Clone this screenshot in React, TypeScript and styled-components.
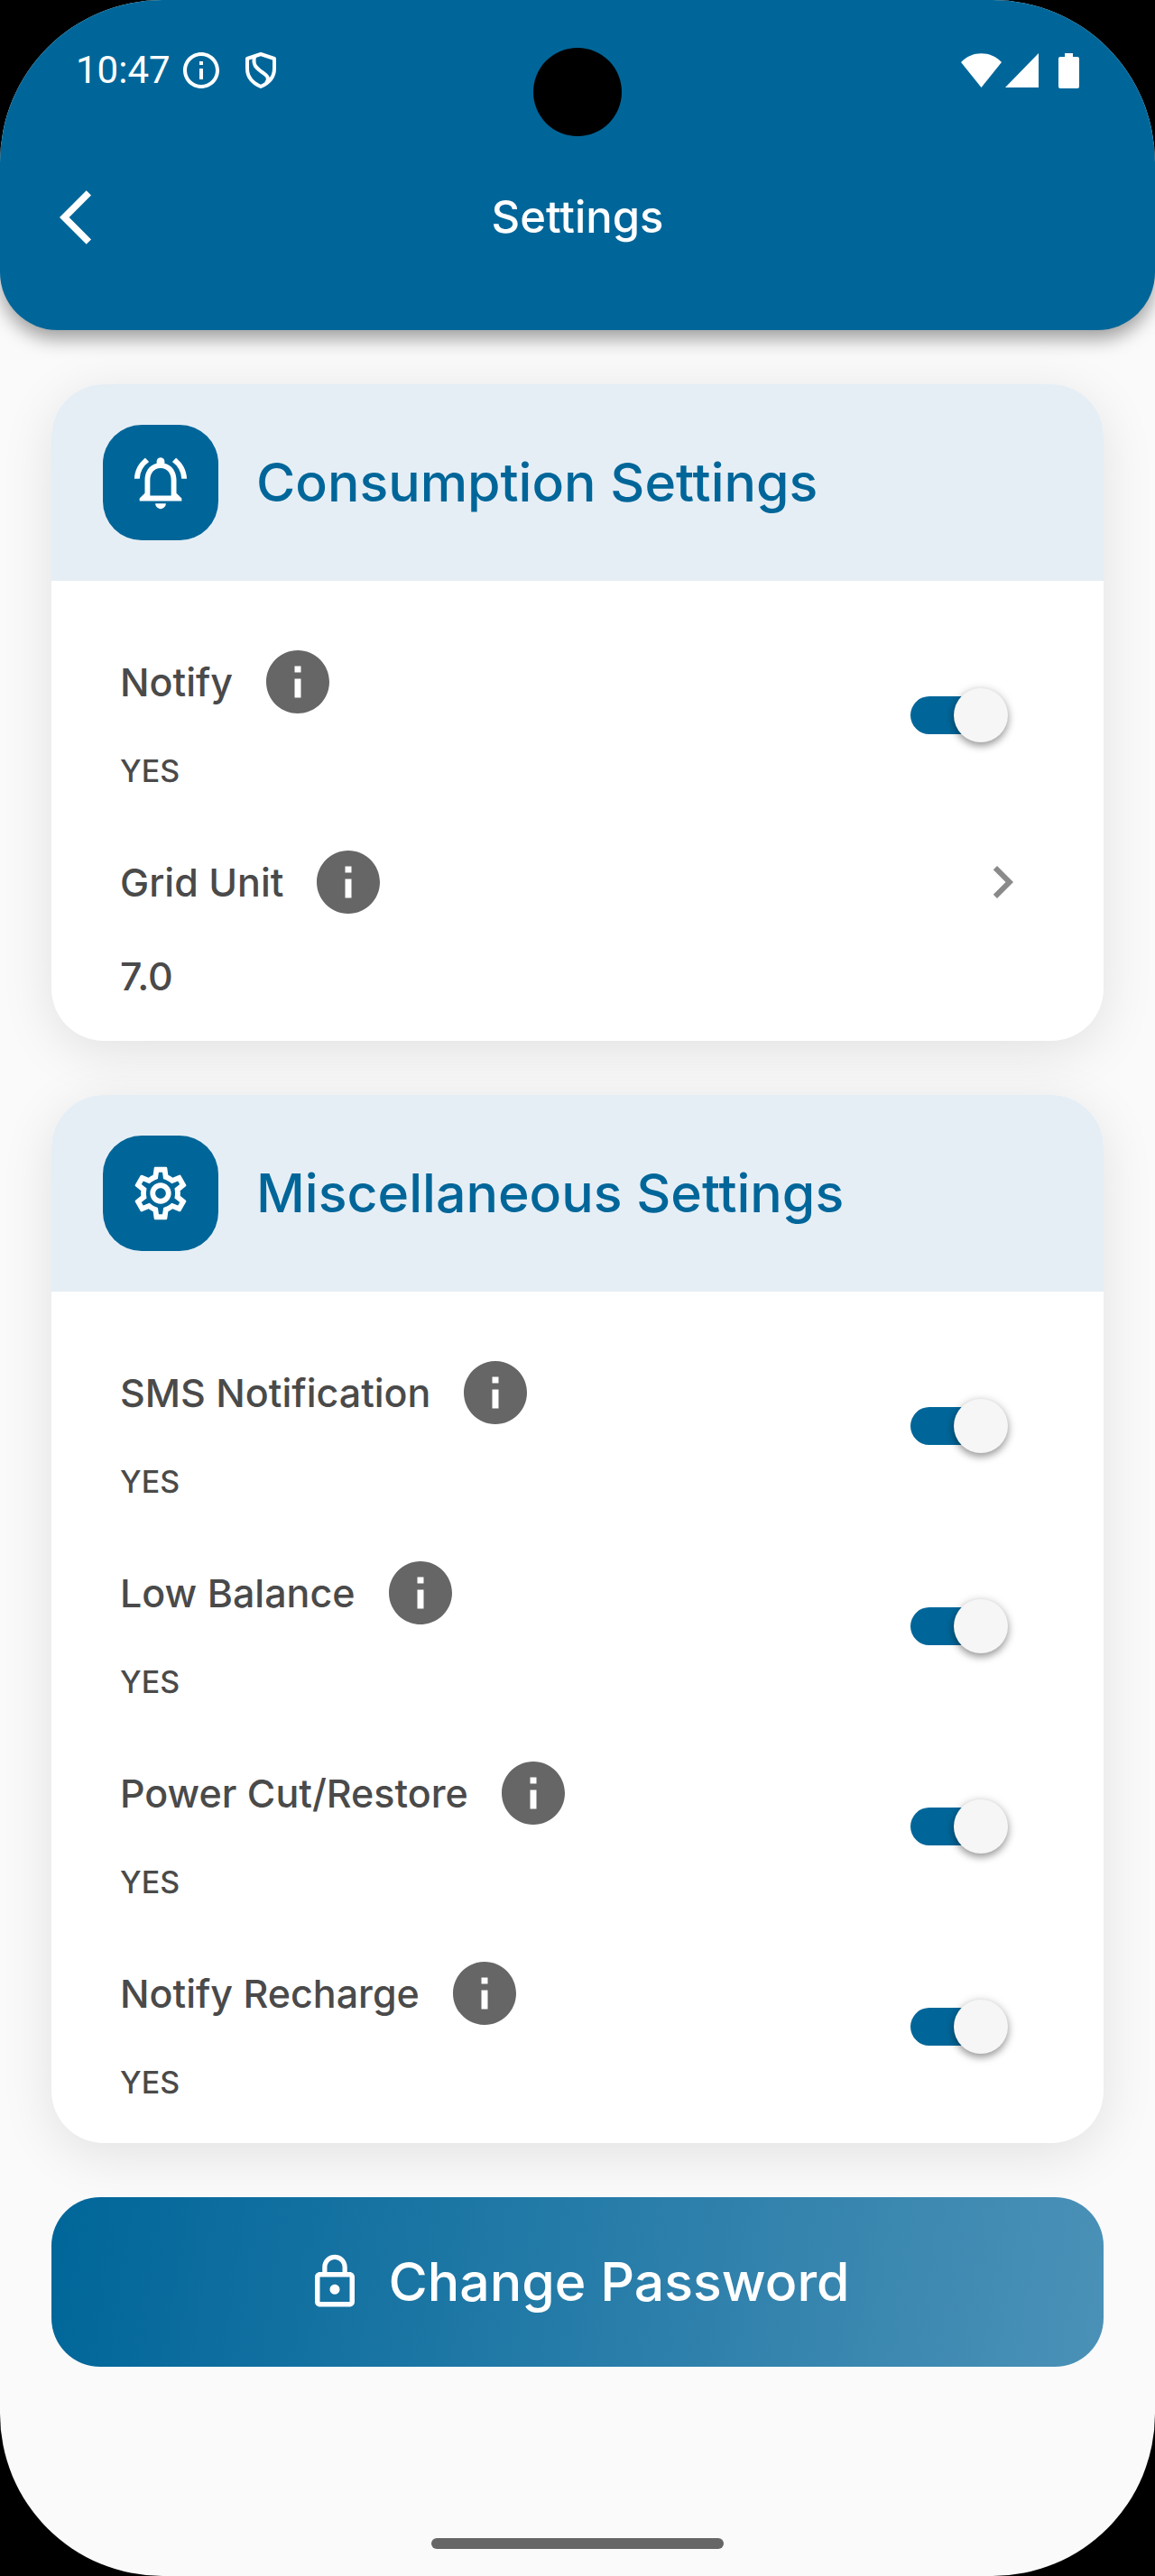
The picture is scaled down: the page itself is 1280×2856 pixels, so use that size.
import React, { useState } from "react";
import styled, { createGlobalStyle } from "styled-components";
import {
  MdArrowBackIos,
  MdChevronRight,
  MdInfo,
  MdInfoOutline,
  MdLockOutline,
  MdOutlineNotificationsActive,
  MdOutlineSettings,
} from "react-icons/md";

const brand = "#006699";
const ink = "#4a4a4a";
const surface = "#fafafa";

const GlobalStyle = createGlobalStyle`
  * { box-sizing: border-box; }
  body {
    margin: 0;
    background: #000;
    font-family: Inter, "Open Sans", sans-serif;
    font-weight: 500;
    color: ${ink};
  }
  button {
    border: 0;
    padding: 0;
    background: none;
    font: inherit;
    color: inherit;
    cursor: pointer;
  }
  svg { display: block; flex: none; }
`;

const Screen = styled.div`
  display: flex;
  flex-direction: column;
  min-height: 100vh;
  background: ${surface};
  border-radius: 180px;
  overflow: hidden;
`;

const Header = styled.header`
  position: relative;
  z-index: 1;
  padding-bottom: 40px;
  background: ${brand};
  color: #fff;
  border-radius: 0 0 64px 64px;
  box-shadow: 0 10px 20px rgba(0, 0, 0, 0.36);
`;

const StatusBar = styled.div`
  display: flex;
  align-items: center;
  justify-content: space-between;
  height: 156px;
  padding: 0 84px;
`;

const StatusGroup = styled.div<{ $gap: number }>`
  display: flex;
  align-items: center;
  gap: ${(p) => p.$gap}px;
`;

const Clock = styled.time`
  font: 400 42px/48px Roboto, sans-serif;
`;

const Camera = styled.div`
  position: absolute;
  top: 53px;
  left: 50%;
  width: 98px;
  height: 98px;
  margin-left: -49px;
  border-radius: 50%;
  background: #000;
`;

const AppBar = styled.div`
  display: grid;
  grid-template-columns: 72px 1fr 72px;
  align-items: center;
  height: 170px;
  padding: 0 66px;
`;

const PageTitle = styled.h1`
  margin: 0;
  font-size: 49px;
  line-height: 64px;
  font-weight: 500;
  text-align: center;
`;

const Main = styled.main`
  flex: 1;
  display: flex;
  flex-direction: column;
  gap: 60px;
  padding: 60px 57px;
`;

const Card = styled.section`
  border-radius: 58px;
  background: #fff;
  box-shadow: 0 12px 58px rgba(0, 0, 0, 0.1);
`;

const CardHeader = styled.div`
  display: flex;
  align-items: center;
  gap: 42px;
  padding: 45px 57px;
  background: #e6eef5;
  border-radius: 58px 58px 0 0;
`;

const IconTile = styled.div`
  display: grid;
  place-items: center;
  width: 128px;
  height: 128px;
  border-radius: 43px;
  background: ${brand};
  color: #fff;
`;

const CardTitle = styled.h2`
  margin: 0;
  font-size: 59px;
  line-height: 80px;
  font-weight: 500;
  color: ${brand};
`;

const CardBody = styled.div`
  padding: 38px 76px 18px;
`;

const Row = styled.div<{ $align: string }>`
  display: flex;
  justify-content: space-between;
  align-items: ${(p) => p.$align};
  padding: 32px 0 22px;
`;

const LabelLine = styled.div`
  display: flex;
  align-items: center;
  gap: 30px;
  height: 84px;
  font-size: 43px;
  line-height: 60px;
`;

const InfoButton = styled.button`
  color: #666;
`;

const Value = styled.div<{ $large?: boolean }>`
  margin-top: 30px;
  font-size: ${(p) => (p.$large ? 43 : 34)}px;
  line-height: ${(p) => (p.$large ? 64 : 54)}px;
`;

const Switch = styled.input`
  appearance: none;
  display: flex;
  align-items: center;
  width: 108px;
  height: 62px;
  margin: 0 30px 10px 0;
  cursor: pointer;

  &::before {
    content: "";
    flex: none;
    width: 100px;
    height: 42px;
    border-radius: 21px;
    background: #b0b0b0;
  }
  &::after {
    content: "";
    flex: none;
    width: 60px;
    height: 60px;
    margin-left: -100px;
    border-radius: 50%;
    background: #f6f6f6;
    box-shadow: 0 4px 8px rgba(0, 0, 0, 0.35), 0 1px 12px rgba(0, 0, 0, 0.12);
  }
  &:checked::before {
    background: ${brand};
  }
  &:checked::after {
    margin-left: -52px;
  }
`;

const OpenButton = styled.button`
  display: grid;
  place-items: center;
  height: 84px;
  color: #8a8a8a;
`;

const PrimaryButton = styled.button`
  display: flex;
  align-items: center;
  justify-content: center;
  gap: 26px;
  height: 188px;
  border-radius: 54px;
  background: linear-gradient(99deg, ${brand}, #4b91b7);
  color: #fff;
  font-size: 59px;
  line-height: 80px;
  font-weight: 500;
`;

const NavArea = styled.footer`
  display: flex;
  justify-content: center;
  padding: 30px;
`;

const HomeHandle = styled.div`
  width: 324px;
  height: 12px;
  border-radius: 6px;
  background: #666;
`;

const ShieldSlot = styled.span`
  padding-left: 15px;
`;

const BatterySlot = styled.span`
  padding-left: 18px;
`;

const ShieldIcon = () => (
  <svg width="34" height="40" viewBox="0 0 34 40" fill="none" stroke="#fff" strokeWidth="4" strokeLinejoin="round">
    <path d="M17 2 L32 7 V18 C32 27 26 34 17 38 C8 34 2 27 2 18 V7 Z" />
    <path d="M10 5 C8 14 12 17 17 21 C25 26 27 29 23 34" />
  </svg>
);

const WifiIcon = () => (
  <svg width="45" height="38" viewBox="0 0 45 38" fill="#fff">
    <path d="M22.5 38 L0 10 C12 -3 33 -3 45 10 Z" />
  </svg>
);

const SignalIcon = () => (
  <svg width="37" height="38" viewBox="0 0 37 38" fill="#fff">
    <path d="M37 0 V38 H0 Z" />
  </svg>
);

const BatteryIcon = () => (
  <svg width="23" height="39" viewBox="0 0 23 39" fill="#fff">
    <path d="M7 0 H16 V4 H21 Q23 4 23 6 V37 Q23 39 21 39 H2 Q0 39 0 37 V6 Q0 4 2 4 H7 Z" />
  </svg>
);

function ToggleRow({ id, label }: { id: string; label: string }) {
  const [on, setOn] = useState(true);
  return (
    <Row $align="center">
      <div>
        <LabelLine>
          <label htmlFor={id}>{label}</label>
          <InfoButton type="button" aria-label={`About ${label}`}>
            <MdInfo size={84} />
          </InfoButton>
        </LabelLine>
        <Value>{on ? "YES" : "NO"}</Value>
      </div>
      <Switch id={id} type="checkbox" role="switch" checked={on} onChange={(e) => setOn(e.target.checked)} />
    </Row>
  );
}

export default function App() {
  return (
    <>
      <GlobalStyle />
      <Screen>
        <Header>
          <StatusBar>
            <StatusGroup $gap={10}>
              <Clock>10:47</Clock>
              <MdInfoOutline size={48} />
              <ShieldSlot>
                <ShieldIcon />
              </ShieldSlot>
            </StatusGroup>
            <StatusGroup $gap={4}>
              <WifiIcon />
              <SignalIcon />
              <BatterySlot>
                <BatteryIcon />
              </BatterySlot>
            </StatusGroup>
          </StatusBar>
          <Camera />
          <AppBar>
            <button type="button" aria-label="Back">
              <MdArrowBackIos size={72} />
            </button>
            <PageTitle>Settings</PageTitle>
          </AppBar>
        </Header>
        <Main>
          <Card>
            <CardHeader>
              <IconTile>
                <MdOutlineNotificationsActive size={70} />
              </IconTile>
              <CardTitle>Consumption Settings</CardTitle>
            </CardHeader>
            <CardBody>
              <ToggleRow id="notify" label="Notify" />
              <Row $align="flex-start">
                <div>
                  <LabelLine>
                    <span>Grid Unit</span>
                    <InfoButton type="button" aria-label="About Grid Unit">
                      <MdInfo size={84} />
                    </InfoButton>
                  </LabelLine>
                  <Value $large>7.0</Value>
                </div>
                <OpenButton type="button" aria-label="Change Grid Unit">
                  <MdChevronRight size={72} />
                </OpenButton>
              </Row>
            </CardBody>
          </Card>
          <Card>
            <CardHeader>
              <IconTile>
                <MdOutlineSettings size={70} />
              </IconTile>
              <CardTitle>Miscellaneous Settings</CardTitle>
            </CardHeader>
            <CardBody>
              <ToggleRow id="sms" label="SMS Notification" />
              <ToggleRow id="low-balance" label="Low Balance" />
              <ToggleRow id="power" label="Power Cut/Restore" />
              <ToggleRow id="recharge" label="Notify Recharge" />
            </CardBody>
          </Card>
          <PrimaryButton type="button">
            <MdLockOutline size={66} />
            <span>Change Password</span>
          </PrimaryButton>
        </Main>
        <NavArea>
          <HomeHandle />
        </NavArea>
      </Screen>
    </>
  );
}
